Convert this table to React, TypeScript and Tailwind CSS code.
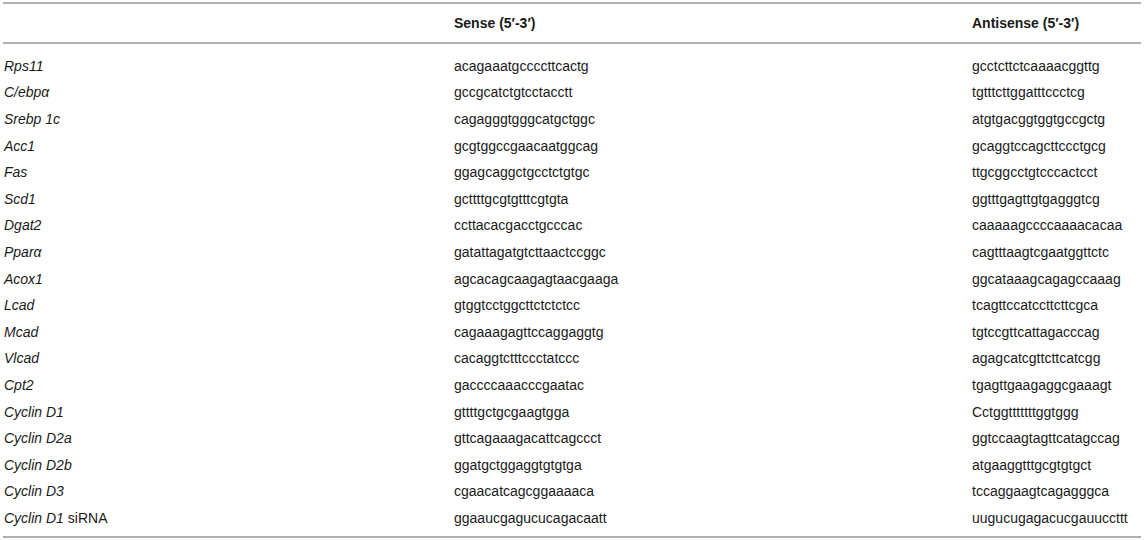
const rows: [string, string, string, string?][] = [
  ["Rps11", "acagaaatgccccttcactg", "gcctcttctcaaaacggttg"],
  ["C/ebpα", "gccgcatctgtcctacctt", "tgtttcttggatttccctcg"],
  ["Srebp 1c", "cagagggtgggcatgctggc", "atgtgacggtggtgccgctg"],
  ["Acc1", "gcgtggccgaacaatggcag", "gcaggtccagcttccctgcg"],
  ["Fas", "ggagcaggctgcctctgtgc", "ttgcggcctgtcccactcct"],
  ["Scd1", "gcttttgcgtgtttcgtgta", "ggtttgagttgtgagggtcg"],
  ["Dgat2", "ccttacacgacctgcccac", "caaaaagccccaaaacacaa"],
  ["Pparα", "gatattagatgtcttaactccggc", "cagtttaagtcgaatggttctc"],
  ["Acox1", "agcacagcaagagtaacgaaga", "ggcataaagcagagccaaag"],
  ["Lcad", "gtggtcctggcttctctctcc", "tcagttccatccttcttcgca"],
  ["Mcad", "cagaaagagttccaggaggtg", "tgtccgttcattagacccag"],
  ["Vlcad", "cacaggtctttccctatccc", "agagcatcgttcttcatcgg"],
  ["Cpt2", "gaccccaaacccgaatac", "tgagttgaagaggcgaaagt"],
  ["Cyclin D1", "gttttgctgcgaagtgga", "Cctggtttttttggtggg"],
  ["Cyclin D2a", "gttcagaaagacattcagccct", "ggtccaagtagttcatagccag"],
  ["Cyclin D2b", "ggatgctggaggtgtgtga", "atgaaggtttgcgtgtgct"],
  ["Cyclin D3", "cgaacatcagcggaaaaca", "tccaggaagtcagagggca"],
  ["Cyclin D1", "ggaaucgagucucagacaatt", "uugucugagacucgauuccttt", "siRNA"],
];

export default function App() {
  return (
    <div className="w-[1144px] h-[540px] bg-white px-[3px] pt-[2px] text-[14px] text-[#1a1a1a] font-['Liberation_Sans',Arial,sans-serif]">
      <div className="border-t-2 border-b-2 border-[#b0b0b0]">
        <div className="grid grid-cols-[450px_518px_1fr] h-[40px] items-center pl-[1px] font-bold border-b-2 border-[#b0b0b0]">
          <div />
          <div>Sense (5′-3′)</div>
          <div>Antisense (5′-3′)</div>
        </div>
        <div className="pt-[9px] pb-[4px]">
          {rows.map(([gene, sense, anti, suffix], i) => (
            <div
              key={i}
              className="grid grid-cols-[450px_518px_1fr] h-[26.6px] items-center pl-[1px]"
            >
              <div>
                <span className="italic">{gene}</span>
                {suffix && <span> {suffix}</span>}
              </div>
              <div>{sense}</div>
              <div>{anti}</div>
            </div>
          ))}
        </div>
      </div>
    </div>
  );
}
